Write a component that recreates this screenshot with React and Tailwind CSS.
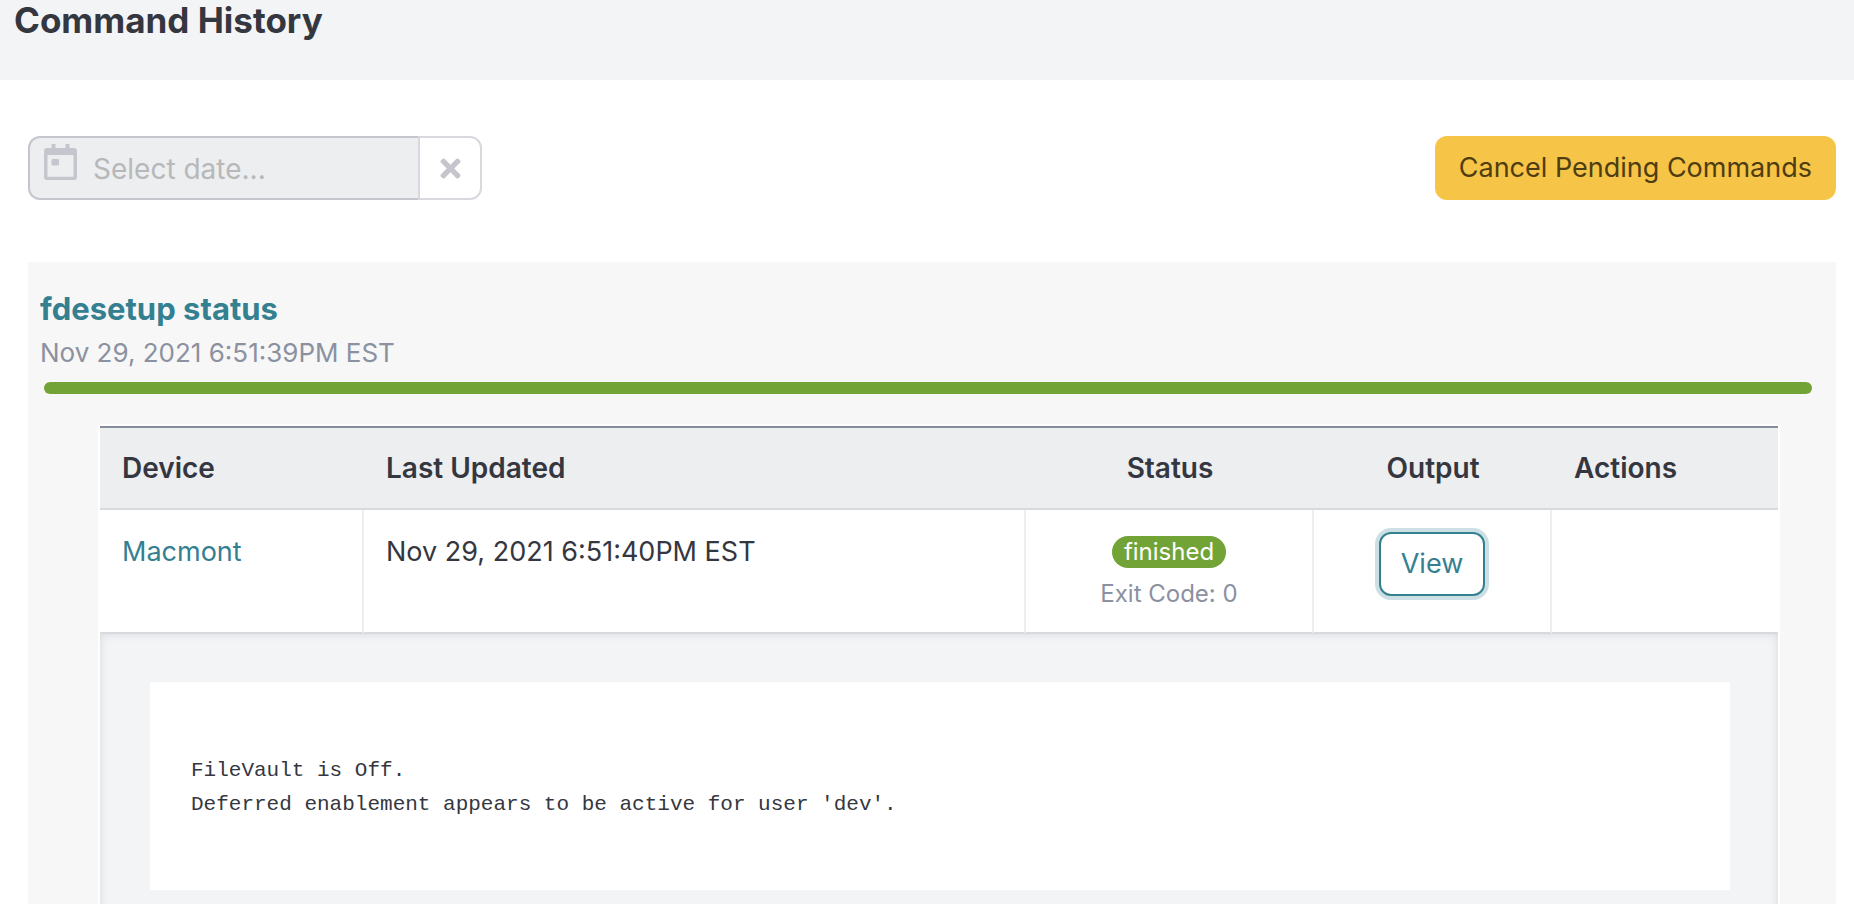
import React, { useState } from 'react';
import { FaTimes } from 'react-icons/fa';

const commands = [
  {
    id: 1,
    name: 'fdesetup status',
    date: 'Nov 29, 2021 6:51:39PM EST',
    devices: [
      {
        id: 1,
        name: 'Macmont',
        updated: 'Nov 29, 2021 6:51:40PM EST',
        status: 'finished',
        exitCode: 0,
        output: "FileVault is Off.\nDeferred enablement appears to be active for user 'dev'.",
      },
    ],
  },
];

const CalendarIcon = () => (
  <svg className="h-9 w-[33px] shrink-0" viewBox="0 0 33 36" fill="currentColor" aria-hidden="true">
    <path
      fillRule="evenodd"
      d="M7.500 0h4v4h10V0h4v4H30a3 3 0 0 1 3 3v26a3 3 0 0 1-3 3H3a3 3 0 0 1-3-3V7a3 3 0 0 1 3-3h4.500zM3.500 11v21.700h26V11zM8.500 15h5.500a1 1 0 0 1 1 1v4.500a1 1 0 0 1-1 1H8.500a1 1 0 0 1-1-1V16a1 1 0 0 1 1-1z"
    />
  </svg>
);

const DateFilter = () => {
  const [date, setDate] = useState('');

  return (
    <div className="flex h-16">
      <label className="flex w-[390px] items-start rounded-l-xl border-2 border-r-0 border-[#c5c6cd] bg-[#edeef0] pl-[14px] pt-[6px] text-[#c5c6cd]">
        <CalendarIcon />
        <input
          type="text"
          aria-label="Date"
          placeholder="Select date..."
          value={date}
          onChange={(e) => setDate(e.target.value)}
          className="ml-4 h-[50px] min-w-0 flex-1 bg-transparent text-[28px] text-[#353740] outline-none placeholder:text-[#b7b8ba]"
        />
      </label>
      <button
        type="button"
        aria-label="Clear date"
        onClick={() => setDate('')}
        className="flex w-16 items-center justify-center rounded-r-xl border-2 border-[#d8d9de] bg-white text-[#c5c6cd]"
      >
        <FaTimes size={29} />
      </button>
    </div>
  );
};

const DeviceRow = ({ device }) => {
  const [open, setOpen] = useState(true);

  return (
    <>
      <tr className="h-[124px] bg-white align-top text-[27px]">
        <td className="border-b-2 border-r-2 border-b-[#d8d9de] border-r-[#edeef0] px-[22px] pt-[22px]">
          <a href="#device" className="text-[#348091]">{device.name}</a>
        </td>
        <td className="border-b-2 border-r-2 border-b-[#d8d9de] border-r-[#edeef0] px-[22px] pt-[22px]">{device.updated}</td>
        <td className="border-b-2 border-r-2 border-b-[#d8d9de] border-r-[#edeef0] pt-[26px] text-center">
          <div className="flex flex-col items-center gap-2">
            <span className="rounded-full bg-[#72a336] px-3 text-2xl leading-8 text-white">{device.status}</span>
            <span className="text-2xl leading-9 text-[#8b919f]">Exit Code: {device.exitCode}</span>
          </div>
        </td>
        <td className="border-b-2 border-r-2 border-b-[#d8d9de] border-r-[#edeef0] pt-[22px] text-center">
          <button
            type="button"
            onClick={() => setOpen(!open)}
            className="h-16 rounded-xl border-2 border-[#348091] bg-white px-5 text-[#348091] ring-4 ring-[#348091]/25"
          >
            View
          </button>
        </td>
        <td className="border-b-2 border-b-[#d8d9de]" />
      </tr>
      {open && (
        <tr>
          <td colSpan={5} className="bg-[#f3f4f6] pb-12 pl-[50px] pr-12 pt-12 shadow-[inset_0_0_8px_rgba(53,55,64,0.15)]">
            <pre className="bg-white px-[41px] pb-[68px] pt-[72px] font-['Courier_New','Liberation_Mono',monospace] text-[21px] leading-[34px]">
              {device.output}
            </pre>
          </td>
        </tr>
      )}
    </>
  );
};

const CommandCard = ({ command }) => (
  <section className="bg-[#f7f7f7] pb-16 pt-6">
    <div className="px-3">
      <h2 className="text-[31px] font-bold leading-[46px]">
        <a href="#command" className="text-[#348091]">{command.name}</a>
      </h2>
      <div className="text-[26px] leading-[42px] text-[#8b919f]">{command.date}</div>
    </div>
    <div className="ml-4 mr-6 mt-2 h-3 rounded-full bg-[#72a336]" />
    <div className="ml-[70px] mr-14 mt-[30px] rounded border-2 border-white">
      <table className="w-full table-fixed border-separate border-spacing-0">
        <colgroup>
          <col className="w-[264px]" />
          <col />
          <col className="w-[288px]" />
          <col className="w-[238px]" />
          <col className="w-[226px]" />
        </colgroup>
        <thead>
          <tr className="h-[84px] bg-[#edeef0]">
            <th className="border-y-2 border-b-[#d8d9de] border-t-[#858c9b] px-[22px] text-left font-semibold">Device</th>
            <th className="border-y-2 border-b-[#d8d9de] border-t-[#858c9b] px-[22px] text-left font-semibold">Last Updated</th>
            <th className="border-y-2 border-b-[#d8d9de] border-t-[#858c9b] font-semibold">Status</th>
            <th className="border-y-2 border-b-[#d8d9de] border-t-[#858c9b] font-semibold">Output</th>
            <th className="border-y-2 border-b-[#d8d9de] border-t-[#858c9b] px-[22px] text-left font-semibold">Actions</th>
          </tr>
        </thead>
        <tbody>
          {command.devices.map((d) => <DeviceRow key={d.id} device={d} />)}
        </tbody>
      </table>
    </div>
  </section>
);

const App = () => (
  <div className="h-screen overflow-hidden bg-white font-['Inter','Liberation_Sans',sans-serif] text-[28px] leading-10 text-[#353740]">
    <header className="h-20 bg-[#f3f4f6] px-[14px]">
      <h1 className="text-[35px] font-bold leading-10">Command History</h1>
    </header>
    <main className="pl-7 pr-[18px] pt-14">
      <div className="mb-[62px] flex items-center justify-between">
        <DateFilter />
        <button type="button" className="h-16 rounded-xl bg-[#f6c447] px-6 text-[27px] text-[#4f3d12]">
          Cancel Pending Commands
        </button>
      </div>
      {commands.map((c) => <CommandCard key={c.id} command={c} />)}
    </main>
  </div>
);

export default App;
